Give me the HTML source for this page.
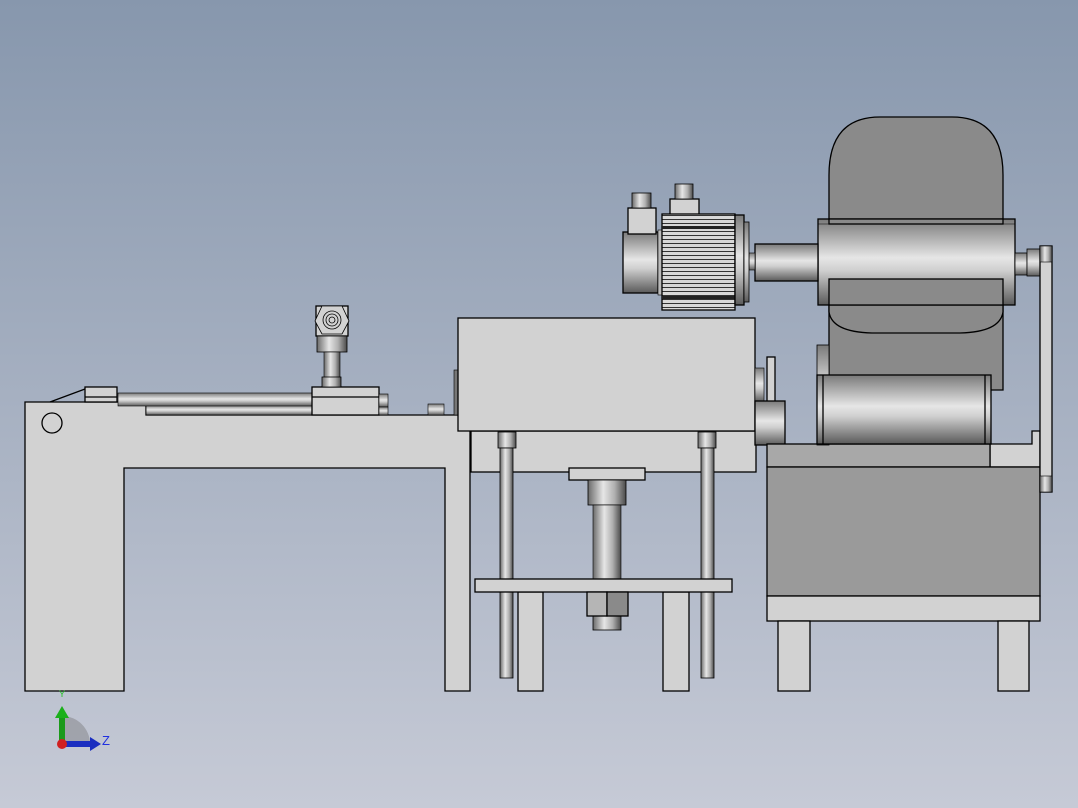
<!DOCTYPE html>
<html><head><meta charset="utf-8"><style>html,body{margin:0;padding:0;}svg{display:block}</style></head>
<body>
<svg width="1078" height="808" viewBox="0 0 1078 808" xmlns="http://www.w3.org/2000/svg" font-family="Liberation Sans, sans-serif">
<defs>
<linearGradient id="bg" x1="0" y1="0" x2="0" y2="1"><stop offset="0" stop-color="#8797ad"/><stop offset="1" stop-color="#c6cad6"/></linearGradient>
<linearGradient id="hc" x1="0" y1="0" x2="0" y2="1"><stop offset="0" stop-color="#7a7a7a"/><stop offset="0.45" stop-color="#e6e6e6"/><stop offset="0.6" stop-color="#cfcfcf"/><stop offset="1" stop-color="#5a5a5a"/></linearGradient>
<linearGradient id="vc" x1="0" y1="0" x2="1" y2="0"><stop offset="0" stop-color="#6a6a6a"/><stop offset="0.4" stop-color="#e6e6e6"/><stop offset="0.7" stop-color="#b0b0b0"/><stop offset="1" stop-color="#4a4a4a"/></linearGradient>
<pattern id="fins" width="4" height="4" patternUnits="userSpaceOnUse"><rect width="4" height="4" fill="#d8d8d8"/><rect y="3" width="4" height="1" fill="#333"/></pattern>
</defs>
<rect width="1078" height="808" fill="url(#bg)"/>
<g stroke="#000" stroke-width="1.3">
<!-- left frame -->
<path d="M25 402 L146 402 L146 415 L470 415 L470 691 L445 691 L445 468 L124 468 L124 691 L25 691 Z" fill="#d2d2d2"/>
<circle cx="52" cy="423" r="10" fill="none"/>
<path d="M50 402 L85 389" fill="none"/>
<rect x="146" y="405" width="166" height="10" fill="url(#hc)" stroke-width="0.8"/>
<rect x="118" y="393" width="194" height="13" fill="url(#hc)" stroke-width="0.6"/>
<rect x="85" y="387" width="32" height="15" fill="#d2d2d2"/>
<line x1="85" y1="397" x2="117" y2="397"/>
<rect x="312" y="387" width="67" height="28" fill="#d2d2d2"/>
<line x1="312" y1="397" x2="379" y2="397"/>
<rect x="379" y="394" width="9" height="13" fill="url(#hc)" stroke-width="0.6"/>
<rect x="379" y="407" width="9" height="8" fill="url(#hc)" stroke-width="0.6"/>
<rect x="428" y="404" width="16" height="11" fill="url(#hc)" stroke-width="0.6"/>
<rect x="454" y="370" width="5" height="45" fill="#777" stroke-width="0.6"/>
<!-- sensor -->
<rect x="316" y="306" width="32" height="30" fill="#d2d2d2"/>
<polygon points="322,306 342,306 349,321 342,334 322,334 315,321" fill="#d2d2d2" stroke-width="0.8"/>
<circle cx="332" cy="320" r="9" fill="none" stroke-width="0.8"/>
<circle cx="332" cy="320" r="6" fill="none" stroke-width="0.8"/>
<circle cx="332" cy="320" r="3" fill="none" stroke-width="0.8"/>
<rect x="317" y="336" width="30" height="16" fill="url(#vc)" stroke-width="0.8"/>
<rect x="324" y="352" width="16" height="26" fill="url(#vc)" stroke-width="0.6"/>
<rect x="322" y="377" width="19" height="10" fill="url(#vc)" stroke-width="0.8"/>
<!-- center -->
<rect x="471" y="431" width="285" height="41" fill="#d2d2d2"/>
<rect x="458" y="318" width="297" height="113" fill="#d2d2d2"/>
<rect x="498" y="432" width="18" height="16" fill="url(#vc)" stroke-width="0.8"/>
<rect x="500" y="448" width="13" height="230" fill="url(#vc)" stroke-width="0.8"/>
<rect x="698" y="432" width="18" height="16" fill="url(#vc)" stroke-width="0.8"/>
<rect x="701" y="448" width="13" height="230" fill="url(#vc)" stroke-width="0.8"/>
<rect x="518" y="592" width="25" height="99" fill="#d2d2d2"/>
<rect x="663" y="592" width="26" height="99" fill="#d2d2d2"/>
<rect x="569" y="468" width="76" height="12" fill="#d2d2d2"/>
<rect x="588" y="480" width="38" height="25" fill="url(#vc)" stroke-width="0.8"/>
<rect x="593" y="505" width="28" height="75" fill="url(#vc)" stroke-width="0.6"/>
<rect x="593" y="614" width="28" height="16" fill="url(#vc)" stroke-width="0.8"/>
<rect x="475" y="579" width="257" height="13" fill="#d2d2d2"/>
<rect x="587" y="592" width="20" height="24" fill="#b5b5b5"/>
<rect x="607" y="592" width="21" height="24" fill="#8a8a8a"/>
<!-- right-of-box parts -->
<rect x="767" y="357" width="8" height="46" fill="#d2d2d2"/>
<rect x="755" y="368" width="9" height="34" fill="url(#hc)" stroke-width="0.6"/>
<rect x="755" y="401" width="30" height="44" fill="url(#hc)"/>
<!-- right base -->
<path d="M990 444 L1032 444 L1032 431 L1040 431 L1040 467 L990 467 Z" fill="#d2d2d2"/>
<rect x="767" y="444" width="223" height="23" fill="#a8a8a8"/>
<rect x="767" y="467" width="273" height="129" fill="#9a9a9a"/>
<rect x="767" y="596" width="273" height="25" fill="#d2d2d2"/>
<rect x="778" y="621" width="32" height="70" fill="#d2d2d2"/>
<rect x="998" y="621" width="31" height="70" fill="#d2d2d2"/>
<!-- reducer -->
<path d="M829 390 L829 175 Q829 117 880 117 L952 117 Q1003 117 1003 175 L1003 390 Z" fill="#8a8a8a"/>
<path d="M829 279 L1003 279 L1003 312 Q1000 332 960 333 L872 333 Q832 332 829 312 Z" fill="#8a8a8a"/>
<rect x="817" y="345" width="12" height="100" fill="url(#hc)" stroke-width="0.8"/>
<rect x="817" y="375" width="174" height="69" fill="url(#hc)"/>
<line x1="823" y1="375" x2="823" y2="444"/><line x1="985" y1="375" x2="985" y2="444"/>
<rect x="818" y="219" width="197" height="86" fill="url(#hc)"/>
<rect x="829" y="219" width="174" height="5" fill="#8a8a8a"/>
<rect x="829" y="279" width="174" height="26" fill="#8a8a8a"/>
<line x1="818" y1="224" x2="1015" y2="224" stroke-width="0.6"/>
<rect x="1015" y="253" width="12" height="22" fill="url(#hc)" stroke-width="0.8"/>
<rect x="1027" y="249" width="13" height="27" fill="url(#hc)" stroke-width="0.8"/>
<rect x="1040" y="246" width="12" height="246" fill="#d2d2d2"/>
<rect x="1040" y="246" width="12" height="16" fill="url(#vc)" stroke-width="0.6"/>
<rect x="1040" y="476" width="12" height="16" fill="url(#vc)" stroke-width="0.6"/>
<!-- motor -->
<rect x="755" y="244" width="63" height="37" fill="url(#hc)"/>
<rect x="749" y="253" width="6" height="17" fill="url(#hc)" stroke-width="0.6"/>
<rect x="623" y="232" width="35" height="61" fill="url(#hc)"/>
<rect x="628" y="208" width="28" height="26" fill="#d2d2d2"/>
<rect x="632" y="193" width="19" height="15" fill="url(#vc)" stroke-width="0.8"/>
<rect x="670" y="199" width="29" height="16" fill="#d2d2d2"/>
<rect x="675" y="184" width="18" height="15" fill="url(#vc)" stroke-width="0.8"/>
<rect x="658" y="230" width="4" height="65" fill="#bbb" stroke-width="0.6"/>
<rect x="662" y="214" width="73" height="96" fill="url(#fins)"/>
<rect x="662" y="226" width="73" height="3" fill="#222" stroke="none"/>
<rect x="662" y="296" width="73" height="3" fill="#222" stroke="none"/>
<rect x="735" y="215" width="9" height="90" fill="url(#hc)"/>
<rect x="744" y="222" width="5" height="80" fill="url(#hc)" stroke-width="0.8"/>
</g>
<!-- triad -->
<path d="M62 744 L62 716 A28 28 0 0 1 90 744 Z" fill="#9a9ca4" opacity="0.85"/>
<rect x="59" y="716" width="6" height="28" fill="#1a9a1a"/>
<polygon points="55,718 62,706 69,718" fill="#1bb01b"/>
<rect x="62" y="741" width="30" height="6" fill="#1a2ec0"/>
<polygon points="90,737 101,744 90,751" fill="#1a2ec0"/>
<circle cx="62" cy="744" r="5" fill="#d02020"/>
<text x="59" y="697" font-size="9" fill="#20c020">Y</text>
<text x="102" y="745" font-size="13" fill="#2030e0">Z</text>
</svg>
</body></html>
